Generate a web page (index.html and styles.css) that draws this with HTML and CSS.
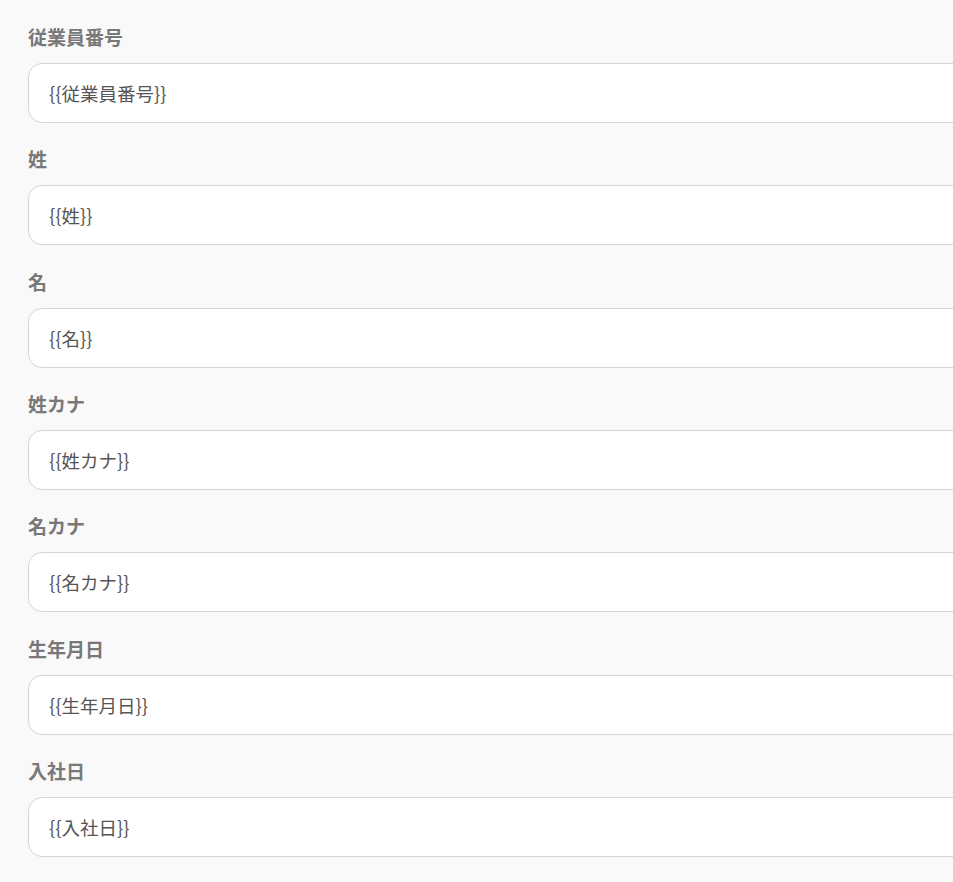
FILE: index.html
```html
<!DOCTYPE html>
<html lang="ja">
<head>
<meta charset="UTF-8" />
<meta name="viewport" content="width=device-width, initial-scale=1" />
<title>従業員情報</title>
<link rel="stylesheet" href="styles.css">
</head>
<body>

<form class="employee-form">
  <div class="field">
    <label class="field-label" for="empNo">従業員番号</label>
    <input class="field-input" type="text" id="empNo" value="{{従業員番号}}" />
  </div>
  <div class="field">
    <label class="field-label" for="lastName">姓</label>
    <input class="field-input" type="text" id="lastName" value="{{姓}}" />
  </div>
  <div class="field">
    <label class="field-label" for="firstName">名</label>
    <input class="field-input" type="text" id="firstName" value="{{名}}" />
  </div>
  <div class="field">
    <label class="field-label" for="lastKana">姓カナ</label>
    <input class="field-input" type="text" id="lastKana" value="{{姓カナ}}" />
  </div>
  <div class="field">
    <label class="field-label" for="firstKana">名カナ</label>
    <input class="field-input" type="text" id="firstKana" value="{{名カナ}}" />
  </div>
  <div class="field">
    <label class="field-label" for="birthday">生年月日</label>
    <input class="field-input" type="text" id="birthday" value="{{生年月日}}" />
  </div>
  <div class="field">
    <label class="field-label" for="joinDate">入社日</label>
    <input class="field-input" type="text" id="joinDate" value="{{入社日}}" />
  </div>
</form>

</body>
</html>
```

FILE: styles.css
```css
html, body {
  overflow: hidden;
}

body {
  margin: 0;
  background: #f9f9f9;
  font-family: "Noto Sans", "Noto Sans CJK JP", sans-serif;
}

.employee-form {
  padding: 26px 0 0 28px;
  width: 1000px;
}

.field {
  margin-bottom: 25.33px;
}

.field-label {
  display: block;
  font-size: 19px;
  line-height: 24px;
  font-weight: bold;
  color: #787878;
  margin-bottom: 13px;
}

.field-input {
  display: block;
  box-sizing: border-box;
  width: 100%;
  height: 60px;
  padding: 0 20px;
  border: 1px solid #d3d4db;
  border-radius: 14px;
  background: #fff;
  font-family: "Noto Sans CJK JP", sans-serif;
  font-size: 18.5px;
  color: #555;
  outline: none;
}
```
